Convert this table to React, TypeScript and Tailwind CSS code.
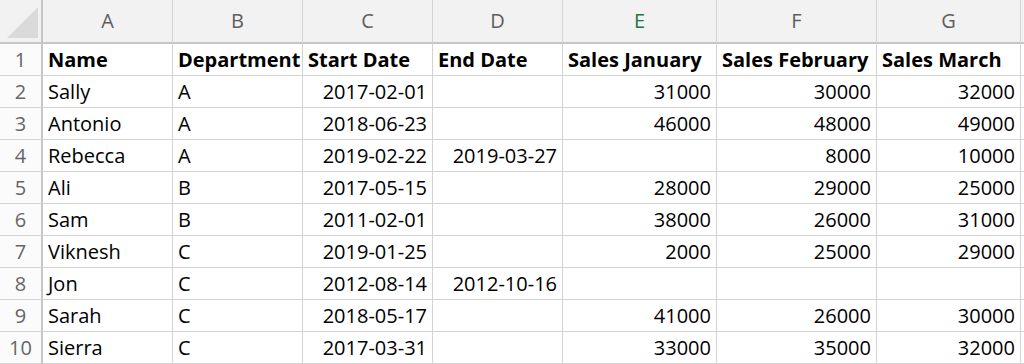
const COLS = ['A', 'B', 'C', 'D', 'E', 'F', 'G']

type Cell = { v: string; right?: boolean; bold?: boolean }

const header = ['Name', 'Department', 'Start Date', 'End Date', 'Sales January', 'Sales February', 'Sales March']

const data: string[][] = [
  ['Sally', 'A', '2017-02-01', '', '31000', '30000', '32000'],
  ['Antonio', 'A', '2018-06-23', '', '46000', '48000', '49000'],
  ['Rebecca', 'A', '2019-02-22', '2019-03-27', '', '8000', '10000'],
  ['Ali', 'B', '2017-05-15', '', '28000', '29000', '25000'],
  ['Sam', 'B', '2011-02-01', '', '38000', '26000', '31000'],
  ['Viknesh', 'C', '2019-01-25', '', '2000', '25000', '29000'],
  ['Jon', 'C', '2012-08-14', '2012-10-16', '', '', ''],
  ['Sarah', 'C', '2018-05-17', '', '41000', '26000', '30000'],
  ['Sierra', 'C', '2017-03-31', '', '33000', '35000', '32000'],
]

const rows: Cell[][] = [
  header.map((v) => ({ v, bold: true })),
  ...data.map((r) => r.map((v, i) => ({ v, right: i >= 2 }))),
]

export default function App() {
  return (
    <div
      className="w-[1024px] h-[364px] overflow-hidden bg-white text-[20px] text-black"
      style={{ fontFamily: '"Open Sans", "Noto Sans", sans-serif' }}
    >
      <div className="grid grid-cols-[43px_130px_130px_130px_130px_154px_160px_144px_1fr]">
        {/* column headers */}
        <div className="relative h-[44px] bg-[#f2f2f2] border-r-2 border-b-2 border-[#c6c6c6]">
          <svg className="absolute left-[7px] top-[7px]" width="31" height="31" viewBox="0 0 31 31">
            <polygon points="31,0 31,31 0,31" fill="#dadada" />
          </svg>
        </div>
        {COLS.map((c) => (
          <div
            key={c}
            className={
              'h-[44px] flex items-center justify-center bg-[#f2f2f2] border-r border-[#d3d3d3] border-b-2 border-b-[#c6c6c6] ' +
              (c === 'E' ? 'text-[#217346]' : 'text-[#5e5e5e]')
            }
          >
            {c}
          </div>
        ))}
        <div className="h-[44px] bg-[#f2f2f2] border-b-2 border-[#c6c6c6]" />

        {rows.map((row, ri) => (
          <Row key={ri} n={ri + 1} cells={row} />
        ))}
      </div>
    </div>
  )
}

function Row({ n, cells }: { n: number; cells: Cell[] }) {
  return (
    <>
      <div className="h-[32px] flex items-center justify-center pt-[1px] bg-[#fbfbfb] border-r-2 border-[#c6c6c6] border-b border-b-[#d3d3d3] text-[#666]">
        {n}
      </div>
      {cells.map((c, i) => (
        <div
          key={i}
          className={
            'h-[32px] flex items-center pt-[1px] px-[5px] whitespace-nowrap overflow-hidden border-r border-b border-[#d3d3d3] ' +
            (c.right ? 'justify-end ' : '') +
            (c.bold ? 'font-bold' : '')
          }
        >
          {c.v}
        </div>
      ))}
      <div className="h-[32px] border-b border-[#d3d3d3]" />
    </>
  )
}
